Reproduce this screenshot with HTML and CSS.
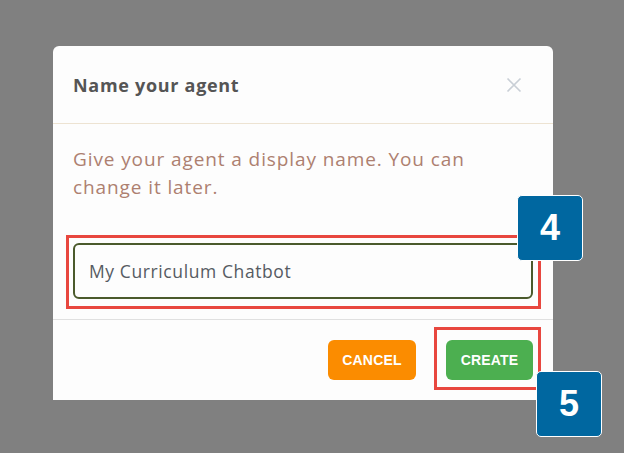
FILE: index.html
```html
<!DOCTYPE html>
<html>
<head>
<meta charset="utf-8">
<link rel="stylesheet" href="styles.css">
</head>
<body>
<div class="modal">
  <div class="modal-header">
    <h2 class="title">Name your agent</h2>
    <svg class="close" width="16" height="16" viewBox="0 0 16 16"><path d="M1.5 1.5 L14.5 14.5 M14.5 1.5 L1.5 14.5" stroke="#c9cfd6" stroke-width="1.6" fill="none"/></svg>
  </div>
  <div class="modal-body">
    <p class="desc">Give your agent a display name. You can change it later.</p>
    <div class="field">
      <div class="name-input">My Curriculum Chatbot</div>
      <div class="mark mark-field"></div>
      <div class="badge badge-4">4</div>
    </div>
  </div>
  <div class="modal-footer">
    <button class="btn btn-cancel">CANCEL</button>
    <div class="create-wrap">
      <button class="btn btn-create">CREATE</button>
      <div class="mark mark-create"></div>
      <div class="badge badge-5">5</div>
    </div>
  </div>
</div>
</body>
</html>
```
FILE: styles.css
```css
html, body {
  margin: 0;
  padding: 0;
}
body {
  background: #808080;
  width: 624px;
  height: 453px;
  overflow: hidden;
  font-family: "Open Sans", "Liberation Sans", sans-serif;
}
.modal {
  margin: 46px 0 0 53px;
  width: 500px;
  height: 354px;
  background: #fdfdfd;
  border-radius: 6px 6px 0 0;
  display: flex;
  flex-direction: column;
}
.modal-header {
  height: 78px;
  box-sizing: border-box;
  padding: 0 31px 0 20px;
  border-bottom: 1px solid #ede3d2;
  display: flex;
  align-items: center;
  justify-content: space-between;
}
.title {
  margin: 0;
  font-size: 18px;
  font-weight: 700;
  color: #555555;
  letter-spacing: 0.7px;
}
.close {
  display: block;
}
.modal-body {
  padding: 21px 20px 20px;
  border-bottom: 1px solid #e0e0e0;
}
.desc {
  margin: 0 0 42px;
  width: 420px;
  font-size: 19px;
  line-height: 28px;
  color: #ad8070;
  letter-spacing: 0.9px;
}
.field {
  position: relative;
}
.name-input {
  height: 56px;
  box-sizing: border-box;
  border: 2px solid #4b5a2c;
  border-radius: 6px;
  padding: 0 14px;
  display: flex;
  align-items: center;
  font-size: 17.5px;
  color: #565b62;
  letter-spacing: 0.6px;
}
.mark {
  position: absolute;
  border: 3px solid #e8473f;
}
.mark-field {
  left: -7px;
  top: -8px;
  right: -8px;
  bottom: -10px;
}
.badge {
  position: absolute;
  width: 66px;
  height: 66px;
  box-sizing: border-box;
  background: #0067a0;
  border: 1.5px solid #ffffff;
  border-radius: 5px;
  color: #ffffff;
  font-family: "Liberation Sans", Arial, sans-serif;
  font-weight: 700;
  font-size: 36px;
  display: flex;
  align-items: center;
  justify-content: center;
}
.badge-4 {
  left: 444px;
  top: -48px;
}
.modal-footer {
  padding: 20px 20px 0;
  display: flex;
  justify-content: flex-end;
  gap: 30px;
}
.create-wrap {
  position: relative;
}
.btn {
  display: block;
  height: 40px;
  border: none;
  border-radius: 6px;
  color: #ffffff;
  font-family: "Liberation Sans", Arial, sans-serif;
  font-weight: 700;
  font-size: 14px;
  letter-spacing: 0.2px;
  padding: 0;
}
.btn-cancel {
  width: 88px;
  background: #fb8c00;
}
.btn-create {
  width: 87px;
  background: #4caf50;
}
.mark-create {
  left: -12px;
  top: -13px;
  right: -8px;
  bottom: -10px;
}
.badge-5 {
  left: 90px;
  top: 31px;
}
```
